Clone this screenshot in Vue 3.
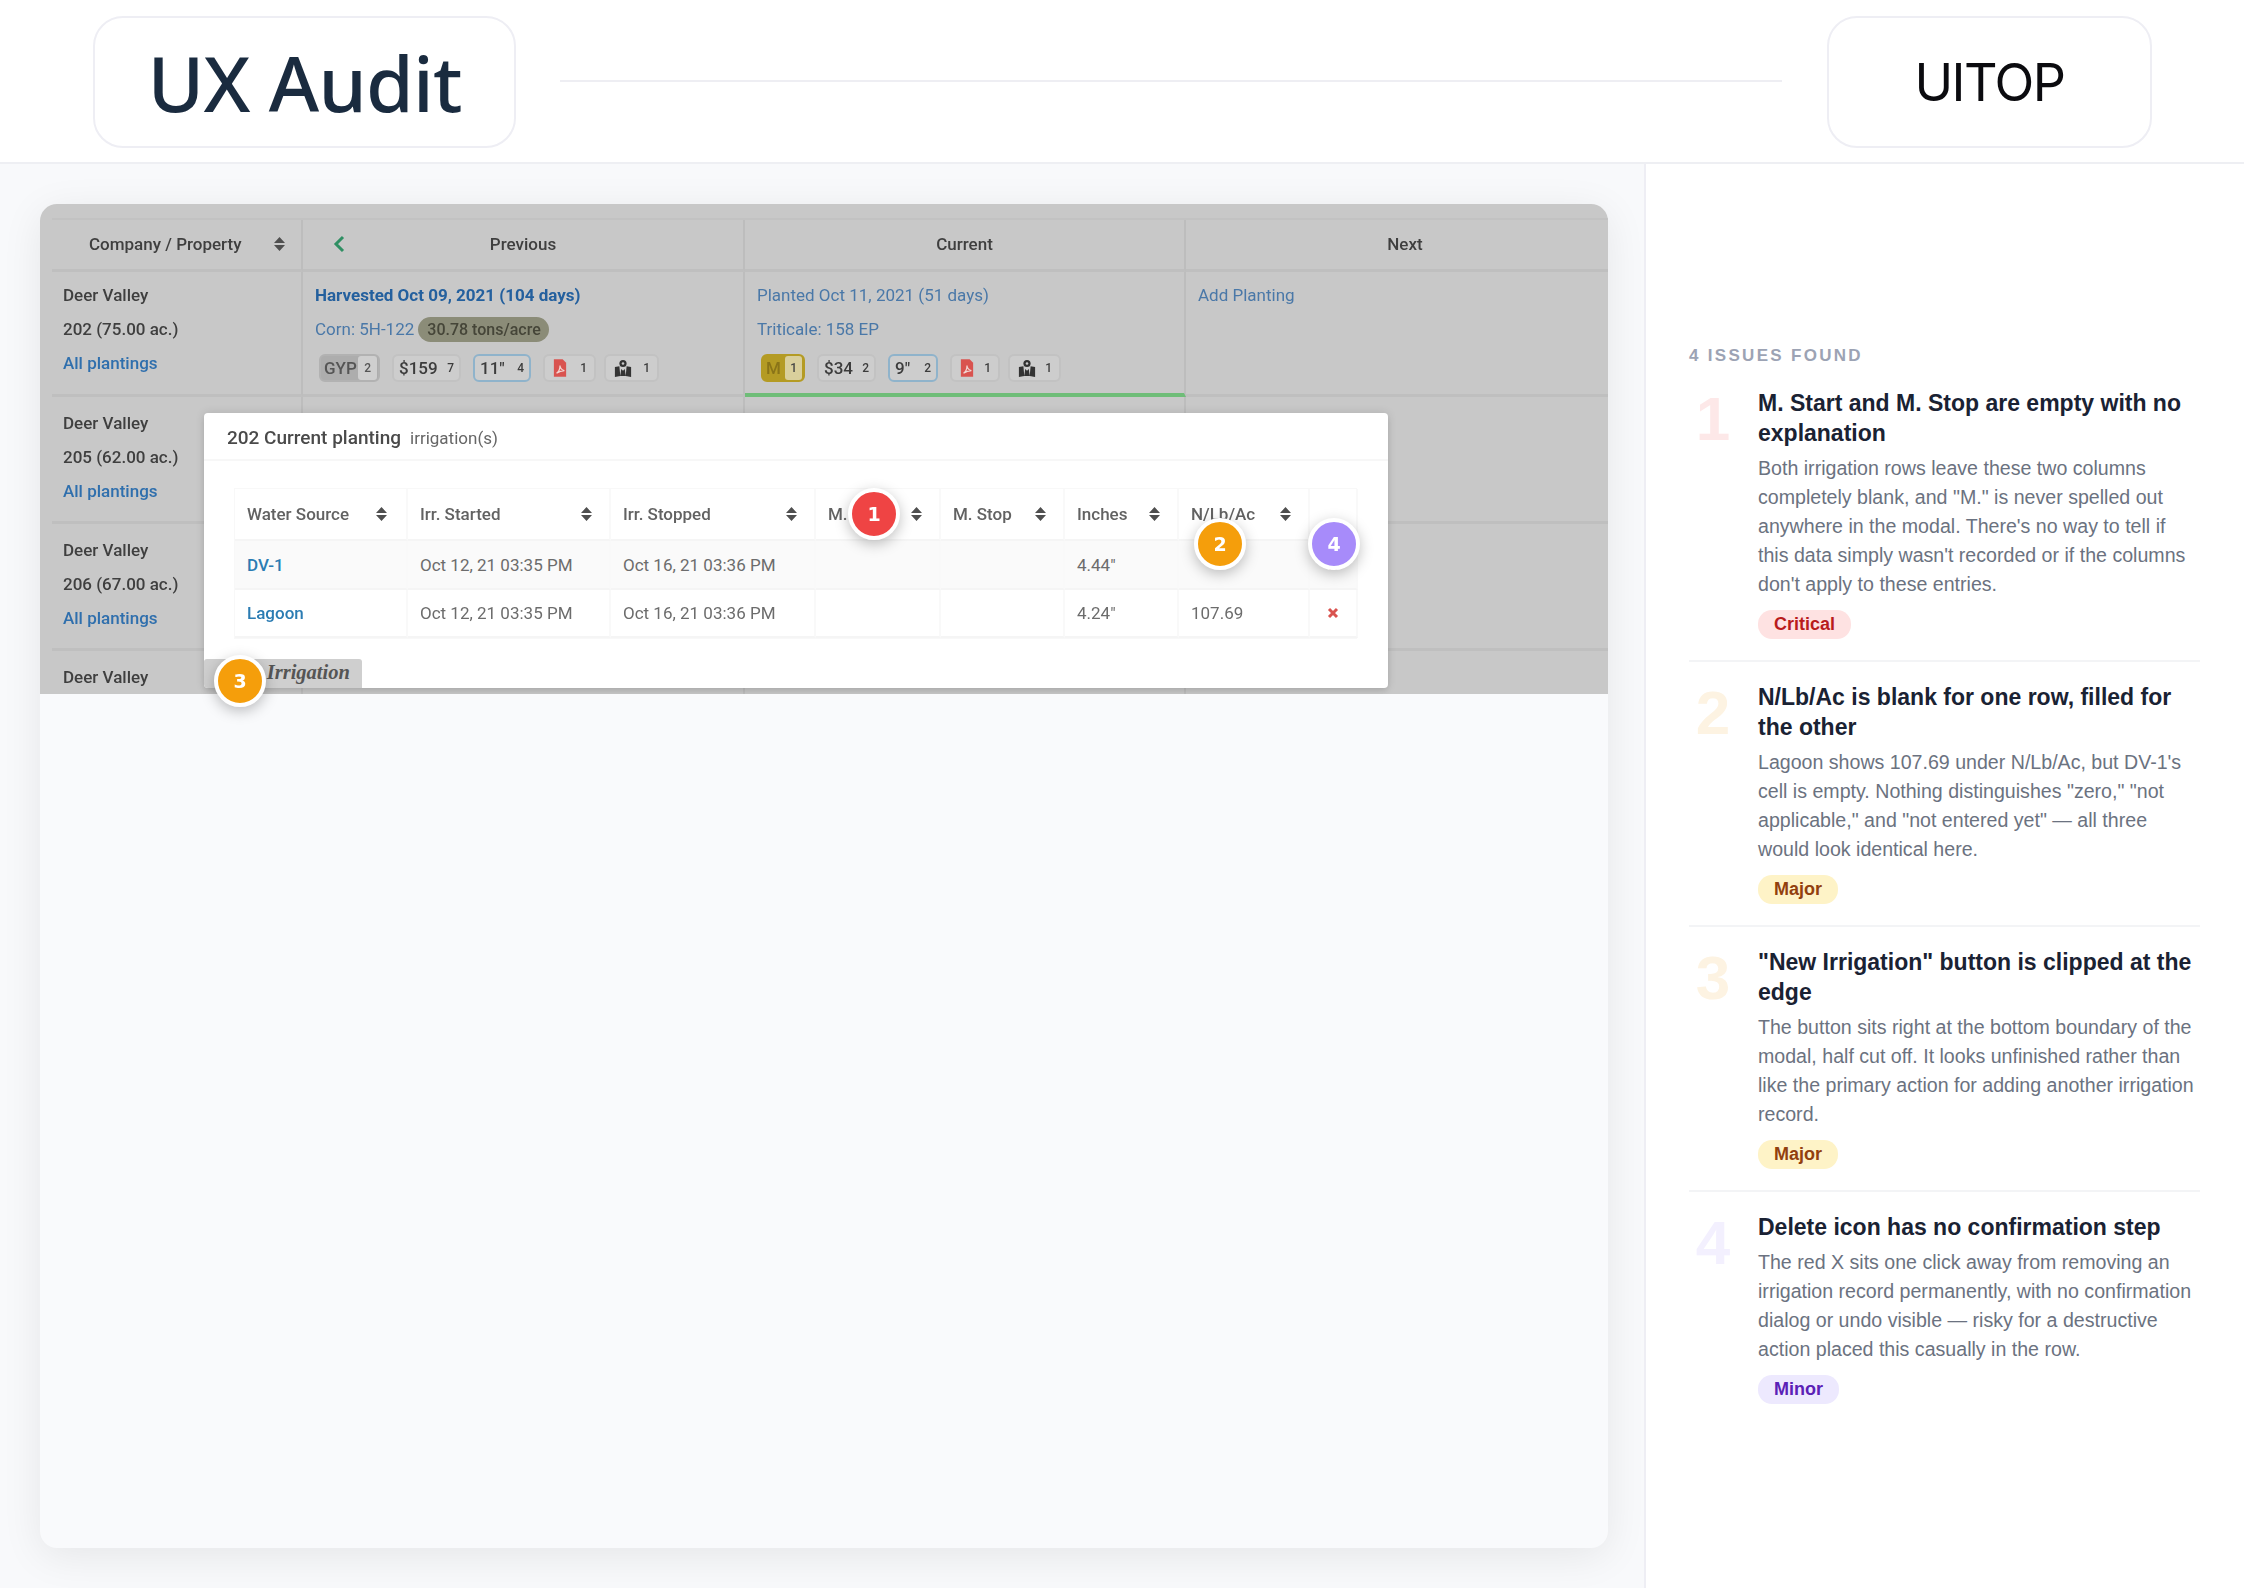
<script setup>
const boardRows = [
  { name: 'Deer Valley', plot: '202 (75.00 ac.)', detail: true },
  { name: 'Deer Valley', plot: '205 (62.00 ac.)' },
  { name: 'Deer Valley', plot: '206 (67.00 ac.)' },
  { name: 'Deer Valley', plot: '' }
]
const prevChips = [
  { label: 'GYP', count: 2, w: 61, kind: 'grey' },
  { label: '$159', count: 7, w: 69, kind: '' },
  { label: '11"', count: 4, w: 58, kind: 'blue' },
  { icon: 'pdf', count: 1, w: 53, kind: 'plain' },
  { icon: 'map', count: 1, w: 55, kind: 'plain tight' }
]
const curChips = [
  { label: 'M', count: 1, w: 44, kind: 'gold' },
  { label: '$34', count: 2, w: 59, kind: '' },
  { label: '9"', count: 2, w: 50, kind: 'blue' },
  { icon: 'pdf', count: 1, w: 50, kind: 'plain' },
  { icon: 'map', count: 1, w: 53, kind: 'plain tight' }
]
const columns = ['Water Source', 'Irr. Started', 'Irr. Stopped', 'M. Start', 'M. Stop', 'Inches', 'N/Lb/Ac', '']
const records = [
  { src: 'DV-1', start: 'Oct 12, 21 03:35 PM', stop: 'Oct 16, 21 03:36 PM', inches: '4.44"', n: '' },
  { src: 'Lagoon', start: 'Oct 12, 21 03:35 PM', stop: 'Oct 16, 21 03:36 PM', inches: '4.24"', n: '107.69' }
]
const markers = [
  { n: 1, x: 834, y: 310, c: 'red' },
  { n: 2, x: 1180, y: 340, c: 'amber' },
  { n: 3, x: 200, y: 477, c: 'amber' },
  { n: 4, x: 1294, y: 340, c: 'violet' }
]
const issues = [
  {
    n: 1, tone: 'critical', sev: 'Critical',
    title: 'M. Start and M. Stop are empty with no explanation',
    body: 'Both irrigation rows leave these two columns completely blank, and "M." is never spelled out anywhere in the modal. There\'s no way to tell if this data simply wasn\'t recorded or if the columns don\'t apply to these entries.'
  },
  {
    n: 2, tone: 'major', sev: 'Major',
    title: 'N/Lb/Ac is blank for one row, filled for the other',
    body: 'Lagoon shows 107.69 under N/Lb/Ac, but DV-1\'s cell is empty. Nothing distinguishes "zero," "not applicable," and "not entered yet" — all three would look identical here.'
  },
  {
    n: 3, tone: 'major', sev: 'Major',
    title: '"New Irrigation" button is clipped at the edge',
    body: 'The button sits right at the bottom boundary of the modal, half cut off. It looks unfinished rather than like the primary action for adding another irrigation record.'
  },
  {
    n: 4, tone: 'minor', sev: 'Minor',
    title: 'Delete icon has no confirmation step',
    body: 'The red X sits one click away from removing an irrigation record permanently, with no confirmation dialog or undo visible — risky for a destructive action placed this casually in the row.'
  }
]
</script>

<template>
  <div class="page">
    <header class="top">
      <div class="title-card"><h1>UX Audit</h1></div>
      <div class="rule"></div>
      <div class="brand-card">UITOP</div>
    </header>

    <div class="body">
      <main class="stage">
        <div class="card">
          <div class="shot-wrap">
            <div class="shot">
              <div class="board">
                <div class="hcell first">
                  <span>Company / Property</span>
                  <svg class="sort" viewBox="0 0 11 14"><path d="M5.5 0L11 6H0zM5.5 14L0 8h11z" /></svg>
                </div>
                <div class="hcell">
                  <svg class="back" viewBox="0 0 12 18"><path d="M10 2L3 9l7 7" /></svg>
                  Previous
                </div>
                <div class="hcell">Current</div>
                <div class="hcell last">Next</div>

                <template v-for="(row, i) in boardRows" :key="i">
                  <div class="cell first" :class="{ lead: row.detail }">
                    <div>{{ row.name }}</div>
                    <div v-if="row.plot">{{ row.plot }}</div>
                    <a v-if="row.plot">All plantings</a>
                  </div>
                  <div class="cell" :class="{ lead: row.detail }">
                    <template v-if="row.detail">
                      <a class="strong">Harvested Oct 09, 2021 (104 days)</a>
                      <div class="crop"><a>Corn: 5H-122</a><span class="tons">30.78 tons/acre</span></div>
                      <div class="chips">
                        <div v-for="c in prevChips" :key="c.w" class="chip" :class="c.kind" :style="{ width: c.w + 'px' }">
                          <span v-if="c.label" class="lab">{{ c.label }}</span>
                          <svg v-else-if="c.icon === 'pdf'" class="ic" viewBox="0 0 16 20"><path fill="#d9534f" d="M1 0h10l4 4v16H1z" /><path fill="none" stroke="#f3d5d2" stroke-width="1.4" d="M4 16c3-2 4-6 4-9 0 3 2 5 5 6-3 0-6 1-9 3z" /></svg>
                          <svg v-else class="ic map" viewBox="0 0 20 20"><circle cx="10" cy="5" r="4" fill="#333" /><circle cx="10" cy="5" r="1.4" fill="#c9c9c9" /><path fill="#333" d="M1 9l5-1 1 11-6 1zM8 11l2 2 2-2 1 8H7zM14 8l5 1v11l-6-1z" /></svg>
                          <span class="cnt">{{ c.count }}</span>
                        </div>
                      </div>
                    </template>
                  </div>
                  <div class="cell" :class="{ active: row.detail, lead: row.detail }">
                    <template v-if="row.detail">
                      <a>Planted Oct 11, 2021 (51 days)</a>
                      <div class="crop"><a>Triticale: 158 EP</a></div>
                      <div class="chips">
                        <div v-for="c in curChips" :key="c.w" class="chip" :class="c.kind" :style="{ width: c.w + 'px' }">
                          <span v-if="c.label" class="lab">{{ c.label }}</span>
                          <svg v-else-if="c.icon === 'pdf'" class="ic" viewBox="0 0 16 20"><path fill="#d9534f" d="M1 0h10l4 4v16H1z" /><path fill="none" stroke="#f3d5d2" stroke-width="1.4" d="M4 16c3-2 4-6 4-9 0 3 2 5 5 6-3 0-6 1-9 3z" /></svg>
                          <svg v-else class="ic map" viewBox="0 0 20 20"><circle cx="10" cy="5" r="4" fill="#333" /><circle cx="10" cy="5" r="1.4" fill="#c9c9c9" /><path fill="#333" d="M1 9l5-1 1 11-6 1zM8 11l2 2 2-2 1 8H7zM14 8l5 1v11l-6-1z" /></svg>
                          <span class="cnt">{{ c.count }}</span>
                        </div>
                      </div>
                    </template>
                  </div>
                  <div class="cell last" :class="{ lead: row.detail }">
                    <a v-if="row.detail">Add Planting</a>
                  </div>
                </template>
              </div>

              <section class="modal">
                <div class="modal-head"><strong>202 Current planting</strong><span>irrigation(s)</span></div>
                <div class="table">
                  <div v-for="(col, i) in columns" :key="i" class="th">
                    <span>{{ col }}</span>
                    <svg v-if="col" class="sort" viewBox="0 0 11 14"><path d="M5.5 0L11 6H0zM5.5 14L0 8h11z" /></svg>
                  </div>
                  <template v-for="(r, i) in records" :key="r.src">
                    <div class="td" :class="{ odd: i === 0 }"><a>{{ r.src }}</a></div>
                    <div class="td" :class="{ odd: i === 0 }">{{ r.start }}</div>
                    <div class="td" :class="{ odd: i === 0 }">{{ r.stop }}</div>
                    <div class="td" :class="{ odd: i === 0 }"></div>
                    <div class="td" :class="{ odd: i === 0 }"></div>
                    <div class="td" :class="{ odd: i === 0 }">{{ r.inches }}</div>
                    <div class="td" :class="{ odd: i === 0 }">{{ r.n }}</div>
                    <div class="td del" :class="{ odd: i === 0 }">
                      <svg viewBox="0 0 12 12"><path d="M2 2l8 8M10 2l-8 8" /></svg>
                    </div>
                  </template>
                </div>
                <div class="new-btn">New Irrigation</div>
              </section>
            </div>
            <div
              v-for="m in markers"
              :key="m.n"
              class="marker"
              :class="m.c"
              :style="{ left: m.x + 'px', top: m.y + 'px' }"
            >{{ m.n }}</div>
          </div>
        </div>
      </main>

      <aside class="side">
        <div class="found">4 ISSUES FOUND</div>
        <article v-for="it in issues" :key="it.n" class="issue">
          <div class="num" :class="it.tone + '-num-' + it.n">{{ it.n }}</div>
          <div class="issue-main">
            <h3>{{ it.title }}</h3>
            <p>{{ it.body }}</p>
            <span class="sev" :class="it.tone">{{ it.sev }}</span>
          </div>
        </article>
      </aside>
    </div>
  </div>
</template>

<style>
html, body { margin: 0; background: #fff; }
</style>

<style scoped>
.page {
  width: 2244px;
  height: 1588px;
  display: flex;
  flex-direction: column;
  overflow: hidden;
  background: #fff;
  font-family: "Liberation Sans", Arial, sans-serif;
}
.top {
  height: 162px;
  flex: none;
  box-sizing: border-box;
  display: flex;
  align-items: center;
  padding: 2px 92px 0 93px;
  border-bottom: 0;
  box-shadow: 0 2px 0 #eeeff3;
  background: #fff;
  position: relative;
}
.title-card, .brand-card {
  height: 132px;
  box-sizing: border-box;
  border: 2px solid #eeeef4;
  border-radius: 30px;
  display: flex;
  align-items: center;
  justify-content: center;
  flex: none;
}
.title-card { width: 423px; }
.title-card h1 {
  margin: 0;
  font-family: "Noto Sans", sans-serif;
  font-weight: 500;
  font-size: 77px;
  letter-spacing: -0.8px;
  color: #1a2b3f;
}
.brand-card {
  width: 325px;
  font-family: Inter, sans-serif;
  font-size: 52px;
  letter-spacing: -1.5px;
  color: #0b0b0f;
}
.rule {
  flex: 1;
  height: 2px;
  margin: 0 45px 2px 44px;
  background: #eeeef3;
}
.body { flex: 1; display: flex; min-height: 0; padding-top: 2px; }
.stage {
  width: 1644px;
  box-sizing: border-box;
  padding: 40px 36px 40px 40px;
  background: #f8f9fb;
}
.card {
  height: 1344px;
  border-radius: 17px;
  background: #f9fafc;
  box-shadow: 0 8px 40px rgba(0, 0, 0, 0.08);
}
.shot-wrap { position: relative; }
.shot {
  position: relative;
  height: 490px;
  overflow: hidden;
  border-radius: 17px 17px 0 0;
  background: #c8c8c8;
  font-family: Roboto, sans-serif;
  font-size: 17px;
  color: #3f3f3f;
}
.board {
  margin: 14px -16px 0 12px;
  filter: blur(0.7px);
  display: grid;
  grid-template-columns: 251px 442px 441px 1fr;
  grid-template-rows: 52px 125px 127px 127px 127px;
  border-top: 2px solid #c2c2c2;
}
.hcell {
  position: relative;
  box-sizing: border-box;
  padding-bottom: 2px;
  display: flex;
  align-items: center;
  justify-content: center;
  font-weight: 500;
  border-right: 2px solid #bdbdbd;
  border-bottom: 3px solid #bfbfbf;
}
.hcell.first { justify-content: flex-start; padding-left: 37px; }
.hcell.first .sort { position: absolute; right: 16px; top: 17px; }
.hcell.last { border-right: 0; }
.back {
  position: absolute;
  left: 30px;
  top: 15px;
  width: 12px;
  height: 18px;
  fill: none;
  stroke: #2f8f63;
  stroke-width: 3;
}
.sort { width: 11px; height: 14px; fill: #4f4f4f; flex: none; }
.cell {
  box-sizing: border-box;
  padding: 9px 12px 0;
  border-right: 2px solid #bdbdbd;
  border-bottom: 3px solid #bfbfbf;
  line-height: 34px;
  font-weight: 500;
  display: flex;
  flex-direction: column;
  align-items: flex-start;
}
.cell.lead { padding-top: 6px; }
.cell.first { padding-left: 11px; }
.cell.last { border-right: 0; }
.cell.active { border-bottom: 4px solid #6fbd78; }
.cell a { color: #4a78a8; font-weight: 400; }
.cell.first a { color: #2f6fad; font-weight: 500; }
.cell a.strong { color: #24609e; font-weight: 700; }
.crop { display: flex; align-items: center; gap: 4px; }
.tons {
  height: 25px;
  line-height: 25px;
  padding: 0 8px 0 9px;
  border-radius: 13px;
  background: #8b8c78;
  color: #454538;
  font-size: 16px;
  font-weight: 500;
}
.chips { display: flex; gap: 12px; margin: 8px 0 0 4px; }
.chip {
  box-sizing: border-box;
  height: 28px;
  display: flex;
  align-items: center;
  justify-content: space-between;
  padding: 0 5px;
  border: 2px solid #c2c2c2;
  border-radius: 6px;
  background: #cdcdcd;
  line-height: 1;
  color: #3c3c3c;
  font-weight: 500;
}
.chip.grey { background: #adadad; border-color: #b2b2b2; padding: 0 1px 0 3px; color: #555; }
.chip.blue { border-color: #8fb3cb; }
.chip.gold { background: #b49b24; border-color: #b49b24; padding: 0 1px 0 3px; color: #8a7418; }
.chip.plain { padding: 0 7px 0 8px; }
.chip.tight { margin-left: -4px; }
.lab { font-size: 17px; }
.cnt { font-size: 12px; }
.chip.grey .cnt { background: #cfcfcf; padding: 6px 6px; border-radius: 3px; }
.chip.gold .cnt { background: #d9cf9c; padding: 6px 5px; border-radius: 3px; color: #444; }
.ic { width: 14px; height: 18px; }
.ic.map { width: 18px; height: 18px; }

.modal {
  position: absolute;
  left: 164px;
  top: 209px;
  width: 1184px;
  height: 275px;
  overflow: hidden;
  background: #fff;
  border-radius: 4px;
  box-shadow: 0 0 10px rgba(0, 0, 0, 0.12), 0 4px 6px rgba(0, 0, 0, 0.08);
  display: flex;
  flex-direction: column;
  filter: blur(0.65px);
}
.modal-head {
  height: 43px;
  padding: 3px 0 0 23px;
  flex: none;
  display: flex;
  align-items: center;
  gap: 9px;
  border-bottom: 2px solid #f7f7f7;
  color: #4a4a4a;
}
.modal-head strong { font-size: 19px; font-weight: 500; }
.modal-head span { font-size: 17px; color: #666; }
.table {
  margin: 27px 0 0 30px;
  width: 1123px;
  display: grid;
  grid-template-columns: 173px 203px 205px 125px 124px 114px 131px 48px;
  grid-template-rows: 52px 49px 48px;
  flex: none;
  border: 1px solid #f8f8f8;
  box-sizing: border-box;
}
.th, .td {
  display: flex;
  align-items: center;
  box-sizing: border-box;
  padding: 0 12px;
  border-right: 2px solid #f9f9f9;
  border-bottom: 2px solid #f5f5f5;
  color: #6c6c6c;
  font-size: 17px;
}
.th { justify-content: space-between; padding-right: 17px; font-weight: 500; color: #626262; }
.th:first-child { padding-right: 19px; }
.td.odd { background: #fafafa; }
.td a { color: #2b7cb3; font-weight: 500; }
.del { justify-content: center; padding: 0; }
.del svg { width: 12px; height: 12px; fill: none; stroke: #d9534f; stroke-width: 3; }
.new-btn {
  width: 158px;
  height: 30px;
  margin-top: 20px;
  flex: none;
  box-sizing: border-box;
  padding-left: 20px;
  border-radius: 3px 3px 0 0;
  background: #cfcfcf;
  font-family: "Liberation Serif", serif;
  font-style: italic;
  font-weight: 700;
  font-size: 20.5px;
  line-height: 26px;
  color: #555;
  white-space: nowrap;
}

.marker {
  position: absolute;
  width: 52px;
  height: 52px;
  margin: -26px 0 0 -26px;
  box-sizing: border-box;
  border: 4px solid #fff;
  border-radius: 50%;
  display: flex;
  align-items: center;
  justify-content: center;
  color: #fff;
  font-family: "DejaVu Sans", sans-serif;
  font-weight: 700;
  font-size: 19px;
  box-shadow: 0 4px 14px rgba(0, 0, 0, 0.25);
}
.marker.red { background: #ef4444; }
.marker.amber { background: #f59e0b; }
.marker.violet { background: #a78bfa; }

.side {
  flex: 1;
  min-width: 0;
  box-sizing: border-box;
  padding: 182px 44px 0 43px;
  border-left: 2px solid #eeeef4;
  background: #fff;
}
.found {
  font-size: 17px;
  font-weight: 700;
  letter-spacing: 2.3px;
  line-height: 20px;
  color: #9ca3b4;
  margin-bottom: 22px;
}
.issue {
  display: flex;
  gap: 21px;
  padding: 20px 0 21.6px;
  border-bottom: 2px solid #f3f4f6;
}
.issue:first-of-type { padding-top: 0; }
.issue:last-child { border-bottom: 0; }
.num {
  width: 48px;
  flex: none;
  text-align: center;
  font-size: 62px;
  font-weight: 700;
  line-height: 66px;
  margin-top: -2px;
}
.critical-num-1 { color: #fde8e8; }
.major-num-2, .major-num-3 { color: #fdf3e2; }
.minor-num-4 { color: #f3f0fe; }
.issue-main { flex: 1; min-width: 0; }
h3 {
  margin: 0 0 5.6px;
  font-size: 23px;
  line-height: 30px;
  font-weight: 700;
  color: #1a2233;
}
p {
  margin: 0 0 10px;
  font-size: 19.6px;
  line-height: 29.2px;
  color: #6b7280;
}
.sev {
  display: inline-block;
  height: 29px;
  line-height: 29px;
  padding: 0 16px;
  border-radius: 14px;
  font-size: 18px;
  font-weight: 700;
}
.sev.critical { background: #fee2e2; color: #b91c1c; }
.sev.major { background: #fef3c7; color: #92400e; }
.sev.minor { background: #ede9fe; color: #5b21b6; }
</style>
